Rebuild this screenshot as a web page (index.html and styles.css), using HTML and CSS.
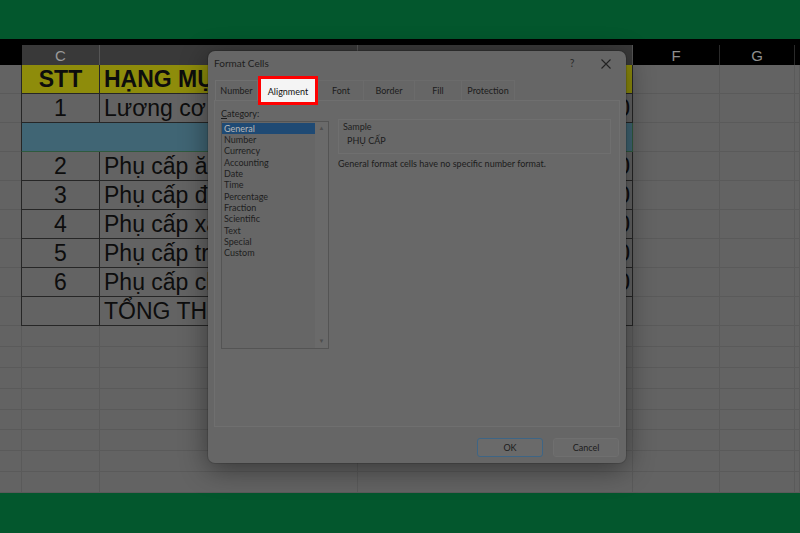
FILE: index.html
```html
<!DOCTYPE html>
<html>
<head>
<meta charset="utf-8">
<link rel="stylesheet" href="styles.css">
</head>
<body>
<div class="page">
  <div class="topbar"></div>
  <div class="blackstrip"></div>
  <div class="sheet">
    <div class="h blank"></div><div class="h sel">C</div><div class="h sel">D</div><div class="h sel">E</div><div class="h">F</div><div class="h">G</div><div class="h blank"></div>

    <div class="c"></div><div class="c t y first bold num">STT</div><div class="c t y bold txt">HẠNG MỤC</div><div class="c t y"></div><div class="c"></div><div class="c"></div><div class="c"></div>

    <div class="c"></div><div class="c t first num">1</div><div class="c t txt">Lương cơ bản</div><div class="c t val">5.000.000</div><div class="c"></div><div class="c"></div><div class="c"></div>

    <div class="c"></div><div class="c t first blue span3"></div><div class="c"></div><div class="c"></div><div class="c"></div>

    <div class="c"></div><div class="c t first num">2</div><div class="c t txt">Phụ cấp ăn trưa</div><div class="c t val">700.000</div><div class="c"></div><div class="c"></div><div class="c"></div>

    <div class="c"></div><div class="c t first num">3</div><div class="c t txt">Phụ cấp đi lại</div><div class="c t val">500.000</div><div class="c"></div><div class="c"></div><div class="c"></div>

    <div class="c"></div><div class="c t first num">4</div><div class="c t txt">Phụ cấp xăng xe</div><div class="c t val">400.000</div><div class="c"></div><div class="c"></div><div class="c"></div>

    <div class="c"></div><div class="c t first num">5</div><div class="c t txt">Phụ cấp trách nhiệm</div><div class="c t val">1.000.000</div><div class="c"></div><div class="c"></div><div class="c"></div>

    <div class="c"></div><div class="c t first num">6</div><div class="c t txt">Phụ cấp chuyên cần</div><div class="c t val">300.000</div><div class="c"></div><div class="c"></div><div class="c"></div>

    <div class="c"></div><div class="c t first"></div><div class="c t txt">TỔNG THU NHẬP</div><div class="c t"></div><div class="c"></div><div class="c"></div><div class="c"></div>

    <div class="c"></div><div class="c"></div><div class="c"></div><div class="c"></div><div class="c"></div><div class="c"></div><div class="c"></div>
    <div class="c"></div><div class="c"></div><div class="c"></div><div class="c"></div><div class="c"></div><div class="c"></div><div class="c"></div>
    <div class="c"></div><div class="c"></div><div class="c"></div><div class="c"></div><div class="c"></div><div class="c"></div><div class="c"></div>
    <div class="c"></div><div class="c"></div><div class="c"></div><div class="c"></div><div class="c"></div><div class="c"></div><div class="c"></div>
    <div class="c"></div><div class="c"></div><div class="c"></div><div class="c"></div><div class="c"></div><div class="c"></div><div class="c"></div>
    <div class="c"></div><div class="c"></div><div class="c"></div><div class="c"></div><div class="c"></div><div class="c"></div><div class="c"></div>
    <div class="c"></div><div class="c"></div><div class="c"></div><div class="c"></div><div class="c"></div><div class="c"></div><div class="c"></div>
    <div class="c"></div><div class="c"></div><div class="c"></div><div class="c"></div><div class="c"></div><div class="c"></div><div class="c"></div>
  </div>
  <div class="bottombar"></div>

  <div class="dialog">
    <div class="titlebar">
      <span class="title">Format Cells</span>
      <span class="help">?</span>
      <span class="close">
        <svg width="10" height="10" viewBox="0 0 10 10"><path d="M0.5 0.5 L9.5 9.5 M9.5 0.5 L0.5 9.5" stroke="#222" stroke-width="1.1" fill="none"/></svg>
      </span>
    </div>
    <div class="tabs">
      <div class="tab w-number">Number</div>
      <div class="tab active">Alignment</div>
      <div class="tab w-font">Font</div>
      <div class="tab w-border">Border</div>
      <div class="tab w-fill">Fill</div>
      <div class="tab w-prot">Protection</div>
    </div>
    <div class="panel">
      <div class="leftcol">
        <div class="label">Category:</div>
        <div class="listbox">
          <div class="items">
            <div class="item selected">General</div>
            <div class="item">Number</div>
            <div class="item">Currency</div>
            <div class="item">Accounting</div>
            <div class="item">Date</div>
            <div class="item">Time</div>
            <div class="item">Percentage</div>
            <div class="item">Fraction</div>
            <div class="item">Scientific</div>
            <div class="item">Text</div>
            <div class="item">Special</div>
            <div class="item">Custom</div>
          </div>
          <div class="scroll">
            <span class="arrow">▲</span>
            <span class="arrow">▼</span>
          </div>
        </div>
      </div>
      <div class="rightcol">
        <div class="group">
          <div class="glabel">Sample</div>
          <div class="gvalue">PHỤ CẤP</div>
        </div>
        <div class="desc">General format cells have no specific number format.</div>
      </div>
    </div>
    <div class="buttons">
      <div class="btn ok">OK</div>
      <div class="btn">Cancel</div>
    </div>
  </div>
</div>
</body>
</html>
```
FILE: styles.css
```css
* { box-sizing: border-box; }
html, body { margin: 0; padding: 0; }
body { width: 800px; height: 533px; overflow: hidden; background: #636363; font-family: "Liberation Sans", Arial, sans-serif; }
.page { position: relative; width: 800px; height: 533px; display: flex; flex-direction: column; }
.topbar { height: 39px; background: #03572d; flex: none; }
.blackstrip { height: 6px; background: #000; flex: none; }
.bottombar { height: 40px; background: #03572d; flex: none; }

.sheet {
  flex: none;
  height: 448px;
  display: grid;
  grid-template-columns: 22px 78px 258px 275px 87px 75px 1fr;
  grid-template-rows: 20px repeat(9, 29px) repeat(8, 1fr);
  background: #636363;
  overflow: hidden;
}
.h {
  background: #000;
  color: #8f8f8f;
  font-size: 15px;
  display: flex; align-items: center; justify-content: center;
  border-right: 1px solid #2a2a2a;
}
.h.sel { background: #393939; border-right: 1px solid #555; color: #9a9a9a; }
.h.blank { border-right: none; }
.c {
  border-right: 1px solid #5a5a5a;
  border-bottom: 1px solid #5a5a5a;
  overflow: hidden;
  white-space: nowrap;
  color: #0d0d0d;
  font-size: 23px;
  display: flex; align-items: center;
}
.c.t { border-right: 1px solid #262626; border-bottom: 1px solid #262626; }
.c.first { border-left: 1px solid #262626; margin-left: -1px; }
.c.y { background: #8e8c0b; }
.c.blue { background: #406574; border-bottom-color: #2f5a3e; border-right-color: #2f5a3e; }
.span3 { grid-column: span 3; }
.bold { font-weight: bold; }
.num { justify-content: center; }
.txt { padding-left: 4px; }
.val { justify-content: flex-end; padding-right: 2px; }

.dialog {
  position: absolute;
  left: 208px; top: 51px;
  width: 418px; height: 412px;
  background: #666666;
  border-radius: 7px;
  box-shadow: 0 6px 28px rgba(0,0,0,0.45), 0 0 0 1px rgba(0,0,0,0.12);
  font-family: Lato, "Open Sans", sans-serif;
  font-size: 9px;
  line-height: 11px;
  color: #1a1a1a;
  display: flex; flex-direction: column;
}
.titlebar { height: 25px; display: flex; align-items: center; padding: 0 0 0 6px; flex: none; }
.title { font-size: 10px; color: #202020; flex: 1; }
.help { font-size: 10.5px; color: #2a2a2a; width: 36px; text-align: center; }
.close { width: 36px; display: flex; align-items: center; justify-content: center; padding-right: 4px; }

.tabs { height: 24px; display: flex; align-items: flex-start; padding-left: 7px; flex: none; position: relative; z-index: 2; }
.tab { height: 20px; margin-top: 4px; display: flex; align-items: center; justify-content: center; border: 1px solid #6e6e6e; border-bottom: none; color: #1c1c1c; }
.w-number { width: 43px; border-color: #707070; }
.w-font { width: 46px; border-color: #6b6b6b; }
.w-border { width: 51px; border-color: #6b6b6b; border-left: none; }
.w-fill { width: 47px; border-color: #6b6b6b; border-left: none; }
.w-prot { width: 53px; border-color: #6b6b6b; border-left: none; }
.tab.active {
  width: 60px; height: 29px; margin-top: 0;
  background: #f4f4f4;
  border: 3px solid #ff0000;
  color: #111;
  padding-top: 1px;
}

.panel {
  flex: none;
  height: 327px;
  margin: 0 6px;
  border: 1px solid #6f6f6f;
  background: #686868;
  display: flex;
  padding: 7px 7px 0 6px;
  gap: 9px;
}
.leftcol { width: 108px; display: flex; flex-direction: column; }
.label { height: 13px; color: #1c1c1c; }
.label::first-letter { text-decoration: underline; }
.listbox { width: 108px; height: 228px; border: 1px solid #545454; display: flex; background: #666; }
.items { flex: 1; padding-top: 1px; }
.item { height: 11px; line-height: 11px; padding-left: 2px; color: #1e1e1e; }
.item:nth-child(3n) { height: 12px; line-height: 12px; }
.item.selected { background: #1f4a74; color: #b8b8b8; }
.scroll { width: 13px; background: #6a6a6a; display: flex; flex-direction: column; justify-content: space-between; align-items: center; padding: 2px 0 3px; }
.arrow { font-size: 6px; color: #4e4e4e; line-height: 8px; }

.rightcol { flex: 1; display: flex; flex-direction: column; padding-top: 11px; }
.group { height: 35px; border: 1px solid #6f6f6f; margin-right: 1px; padding: 2px 0 0 4px; }
.glabel { height: 14px; color: #202020; margin-top: -1px; }
.gvalue { padding-left: 4px; color: #1c1c1c; }
.desc { margin-top: 4px; color: #1c1c1c; }

.buttons { flex: 1; display: flex; justify-content: flex-end; align-items: flex-start; padding: 11px 7px 0 0; gap: 10px; }
.btn { width: 66px; height: 19px; border: 1px solid #6f6f6f; background: #6a6a6a; border-radius: 3px; display: flex; align-items: center; justify-content: center; color: #1c1c1c; }
.btn.ok { border-color: #3e6585; }
```
